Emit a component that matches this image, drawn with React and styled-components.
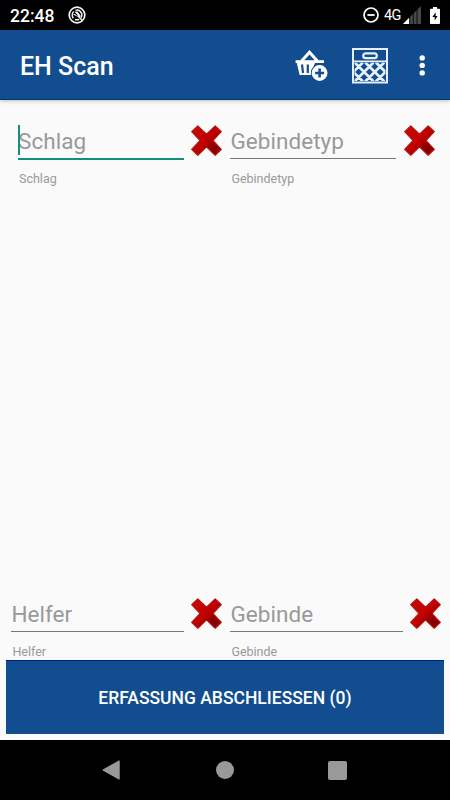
import React from 'react';
import styled, { createGlobalStyle } from 'styled-components';

const GlobalStyle = createGlobalStyle`
  * {
    box-sizing: border-box;
  }

  body {
    margin: 0;
    background: #fafafa;
    font-family: Roboto, 'Liberation Sans', sans-serif;
  }
`;

function NotificationIcon() {
  return (
    <svg width="18" height="18" viewBox="0 0 18 18" fill="none">
      <circle cx="9" cy="9" r="7.8" stroke="#f4f4f4" strokeWidth="1.7" />
      <path d="M5.4 12.2A4.8 4.8 0 0 1 5.8 5.4M7.4 4.4A4.8 4.8 0 0 1 13 11.6M11.2 13.3A4.8 4.8 0 0 1 7 13.300" stroke="#f4f4f4" strokeWidth="1.4" />
      <path d="M6.4 5.8 9.5 5.6 12.8 10 11.8 11.2ZM4.8 8.6 7 7.9 9.800 10.700Z" fill="#f4f4f4" />
      <path d="M9.500 9.500 14 14" stroke="#f4f4f4" strokeWidth="1.5" />
    </svg>
  );
}

function DisturbIcon() {
  return (
    <svg width="16" height="16" viewBox="0 0 16 16" fill="none" stroke="#fff">
      <circle cx="8" cy="8" r="7" strokeWidth="1.7" />
      <path d="M4.4 8h7.2" strokeWidth="1.8" />
    </svg>
  );
}

function SignalIcon() {
  return (
    <svg width="18" height="18" viewBox="0 0 18 18">
      <path d="M0 18 18 0V18Z" fill="#484848" />
      <path d="M0 18 6.2 11.8V18Z" fill="#fff" />
      <path d="M6.7 11V18M10.3 7V18M14 3V18" stroke="#000" strokeWidth=".8" />
    </svg>
  );
}

function BatteryIcon() {
  return (
    <svg width="10" height="17" viewBox="0 0 10 17">
      <path d="M3 0h4v1.7h2.1q.9 0 .9.9v13.5q0 .9-.9.9H.9Q0 17 0 16.1V2.6q0-.9.9-.9H3Z" fill="#fff" />
      <path d="M5.6 5.2 2.4 10h2.3v3.6L7.6 8.9H5.6Z" fill="#000" />
    </svg>
  );
}

function BasketIcon() {
  return (
    <svg width="34" height="34" viewBox="0 0 34 34" fill="none">
      <path d="M6.6 12 14.5 3.2 22.4 12" stroke="#fff" strokeWidth="3" />
      <path d="M.6 11.2H29V14H.6Z" fill="#fff" />
      <path d="M1.8 14H20L17.5 20V26H4.6Z" fill="#fff" />
      <path d="M7 15.5 8 24M12.8 15.5V24" stroke="#124d90" strokeWidth="2.2" />
      <circle cx="24.6" cy="24" r="8.8" fill="#124d90" />
      <circle cx="24.6" cy="24" r="7.9" fill="#fff" />
      <path d="M24.6 19.5v9M20.1 24h9" stroke="#124d90" strokeWidth="2.6" />
    </svg>
  );
}

function CrateIcon() {
  return (
    <svg width="36" height="36" viewBox="0 0 36 36" fill="none">
      <rect x="1" y="1" width="34" height="33.5" stroke="#e6eff8" strokeWidth="2" />
      <path d="M1 13.4H35" stroke="#e6eff8" strokeWidth="1.8" />
      <rect x="11.2" y="5.3" width="13.6" height="4.8" rx="2.4" stroke="#e6eff8" strokeWidth="2.2" />
      <svg x="2.5" y="14.5" width="31" height="18.5" viewBox="0 0 31 18.5">
        <path
          d="M8.3 0-10.7 19M19 0 0 19M29.7 0 10.7 19M40.4 0 21.4 19M-10.6 0 8.4 19M.1 0 19.1 19M10.8 0 29.8 19M21.5 0 40.5 19"
          stroke="#e6eff8"
          strokeWidth="2.7"
        />
      </svg>
    </svg>
  );
}

function MoreIcon() {
  return (
    <svg width="6" height="22" viewBox="0 0 6 22" fill="#fff">
      <circle cx="3.2" cy="2.9" r="2.7" />
      <circle cx="3.2" cy="10.4" r="2.7" />
      <circle cx="3.2" cy="17.9" r="2.7" />
    </svg>
  );
}

function ClearIcon() {
  return (
    <svg width="31" height="31" viewBox="0 0 31 31">
      <defs>
        <linearGradient id="clearRed" x1="0" y1="0" x2="1" y2="1">
          <stop offset="0" stopColor="#c90c08" />
          <stop offset=".5" stopColor="#c20000" />
          <stop offset=".6" stopColor="#a60000" />
          <stop offset=".78" stopColor="#800000" />
          <stop offset="1" stopColor="#a80000" />
        </linearGradient>
      </defs>
      <path
        d="M6.8.9 15.5 9.3 24.2.9 30.3 6.6 21.9 15.5 30.3 24.4 24.2 30.2 15.5 21.8 6.8 30.2.7 24.4 9.1 15.5.7 6.6Z"
        fill="url(#clearRed)"
        stroke="#b51010"
        strokeWidth="1.2"
        strokeLinejoin="round"
      />
    </svg>
  );
}

function ScanField({ label, width, active }) {
  return (
    <FieldGroup>
      <Field $width={width}>
        <FieldInput $active={active}>
          {active && <Cursor />}
          {label}
        </FieldInput>
        <FieldLabel $active={active}>{label}</FieldLabel>
      </Field>
      <ClearButton aria-label="Löschen">
        <ClearIcon />
      </ClearButton>
    </FieldGroup>
  );
}

export default function App() {
  return (
    <Screen>
      <GlobalStyle />
      <StatusBar>
        <Clock>22:48</Clock>
        <NotificationIcon />
        <StatusIcons>
          <DisturbIcon />
          <Network>4G</Network>
          <SignalIcon />
          <BatteryIcon />
        </StatusIcons>
      </StatusBar>
      <AppBar>
        <Title>EH Scan</Title>
        <Actions>
          <BasketIcon />
          <CrateIcon />
          <MoreIcon />
        </Actions>
      </AppBar>
      <Content>
        <FieldRow $left={18}>
          <ScanField label="Schlag" width={166} active />
          <ScanField label="Gebindetyp" width={166} />
        </FieldRow>
        <Spacer />
        <FieldRow $left={11.4}>
          <ScanField label="Helfer" width={172.6} />
          <ScanField label="Gebinde" width={172.5} />
        </FieldRow>
        <SubmitButton>ERFASSUNG ABSCHLIESSEN (0)</SubmitButton>
      </Content>
      <NavBar>
        <svg width="18" height="20" viewBox="0 0 18 20">
          <path d="M.8 10 17.2.8V19.2Z" fill="#999" stroke="#999" strokeLinejoin="round" />
        </svg>
        <HomeButton />
        <RecentButton />
      </NavBar>
    </Screen>
  );
}

const Screen = styled.div`
  display: flex;
  flex-direction: column;
  width: 450px;
  height: 800px;
  overflow: hidden;
`;

const StatusBar = styled.div`
  display: flex;
  align-items: center;
  height: 30px;
  padding: 0 10px;
  background: #000;
  color: #fff;
`;

const Clock = styled.span`
  width: 57.5px;
  font-size: 17.5px;
  font-weight: 500;
  line-height: 30px;
  padding-top: 1px;
`;

const StatusIcons = styled.div`
  display: flex;
  align-items: center;
  margin-left: auto;
`;

const Network = styled.span`
  width: 19px;
  margin-left: 5px;
  font-size: 14.5px;
  letter-spacing: -0.6px;
  line-height: 30px;
  padding-top: 2px;

  & + svg {
    margin-right: 9px;
  }
`;

const AppBar = styled.div`
  display: flex;
  align-items: center;
  justify-content: space-between;
  height: 70px;
  padding: 2px 25px 0 20px;
  background: #124d90;
  border-bottom: 1px solid #053576;
  box-shadow: 0 1px 4px rgba(0, 0, 0, 0.25);
  z-index: 1;
`;

const Title = styled.h1`
  margin: 0;
  padding-top: 2px;
  color: #fff;
  font-size: 25px;
  font-weight: 500;
`;

const Actions = styled.div`
  display: flex;
  align-items: center;

  svg:nth-child(2) {
    margin: 0 31px 0 23px;
  }
`;

const Content = styled.div`
  display: flex;
  flex: 1;
  flex-direction: column;
  padding: 24px 6.5px 6px 0;
`;

const FieldRow = styled.div`
  display: flex;
  gap: 8px;
  height: 63px;
  padding-left: ${(props) => props.$left}px;
`;

const Spacer = styled.div`
  flex: 1;
`;

const FieldGroup = styled.div`
  display: flex;
  gap: 7.4px;
`;

const Field = styled.div`
  width: ${(props) => props.$width}px;
`;

const FieldInput = styled.div`
  position: relative;
  height: ${(props) => (props.$active ? 36 : 35)}px;
  border-bottom: ${(props) => (props.$active ? '2px solid #108f7b' : '1px solid #777')};
  color: #999;
  font-size: 22.5px;
  letter-spacing: 0.05px;
  line-height: 34px;
  white-space: nowrap;
`;

const Cursor = styled.span`
  position: absolute;
  top: 1px;
  left: 0;
  width: 2px;
  height: 30px;
  background: #108f7b;
`;

const FieldLabel = styled.div`
  margin: ${(props) => (props.$active ? -2 : -1)}px 0 0 1px;
  padding-top: 13px;
  color: #999;
  font-size: 12.5px;
  line-height: 15px;
`;

const ClearButton = styled.button`
  display: flex;
  align-self: flex-start;
  margin-top: 1px;
  padding: 0;
  border: 0;
  background: none;
`;

const SubmitButton = styled.button`
  height: 74px;
  margin-left: 6.4px;
  padding: 0;
  border: 0;
  border-top: 1px solid #001e86;
  background: #124d90;
  color: #fff;
  font-family: inherit;
  font-size: 17.5px;
  font-weight: 500;
`;

const NavBar = styled.div`
  display: flex;
  align-items: center;
  justify-content: space-between;
  height: 60px;
  padding: 0 103px 0 102px;
  background: #000;
`;

const HomeButton = styled.div`
  width: 18px;
  height: 18px;
  margin-left: 2px;
  border-radius: 50%;
  background: #999;
`;

const RecentButton = styled.div`
  width: 19px;
  height: 19px;
  border-radius: 2px;
  background: #999;
`;
